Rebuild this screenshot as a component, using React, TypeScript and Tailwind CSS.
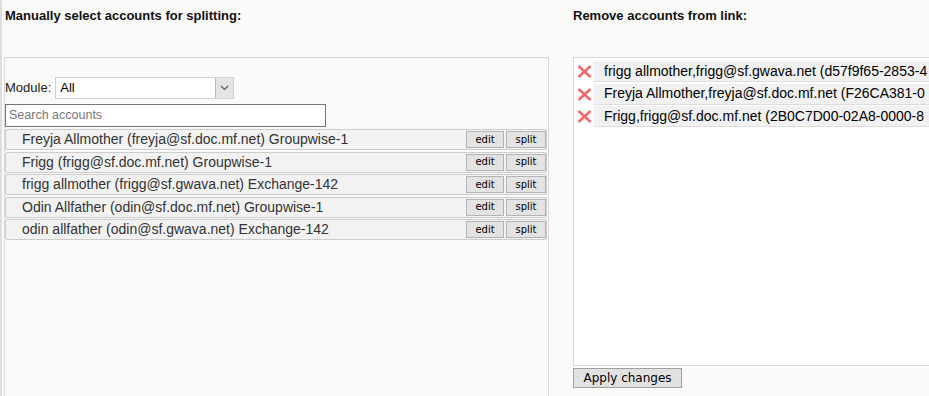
import React from "react";

const rows = [
  "Freyja Allmother (freyja@sf.doc.mf.net) Groupwise-1",
  "Frigg (frigg@sf.doc.mf.net) Groupwise-1",
  "frigg allmother (frigg@sf.gwava.net) Exchange-142",
  "Odin Allfather (odin@sf.doc.mf.net) Groupwise-1",
  "odin allfather (odin@sf.gwava.net) Exchange-142",
];

const linked = [
  "frigg allmother,frigg@sf.gwava.net (d57f9f65-2853-4",
  "Freyja Allmother,freyja@sf.doc.mf.net (F26CA381-0",
  "Frigg,frigg@sf.doc.mf.net (2B0C7D00-02A8-0000-8",
];

function RedX() {
  return (
    <svg width="15" height="13" viewBox="0 0 15 13" className="block">
      <path d="M1.5 1 L13.5 12 M13.5 1 L1.5 12" stroke="#f46a6a" strokeWidth="2.7" strokeLinecap="butt" fill="none" />
    </svg>
  );
}

export default function App() {
  return (
    <div
      className="w-[929px] h-[396px] overflow-hidden bg-[#fafaf8] flex text-black"
      style={{ fontFamily: '"Liberation Sans", Arial, sans-serif' }}
    >
      <div className="w-[2px] shrink-0 bg-[#dedede]" />
      {/* Left column */}
      <div className="ml-[2px] w-[545px] shrink-0 flex flex-col">
        <div className="pt-[8px] pl-[1px] h-[57px] text-[13px] leading-[15px] font-bold text-[#111]">
          Manually select accounts for splitting:
        </div>
        <div className="flex-1 border border-[#d8d8d8] border-b-0 bg-[#fafaf8] pt-[19px]">
          <div className="flex items-center h-[22px] text-[13px] text-[#222]">
            <span className="mr-[4px]">Module:</span>
            <div className="relative w-[179px] h-[22px] bg-white border border-[#d0d0d0] flex items-center">
              <span className="pl-[4px] text-[13px] text-black">All</span>
              <div className="absolute right-0 top-0 bottom-0 w-[18px] bg-[#e5e5e5] border-l border-[#b9b9b9] flex items-center justify-center">
                <svg width="9" height="6" viewBox="0 0 9 6">
                  <path d="M1 1 L4.5 4.5 L8 1" stroke="#555" strokeWidth="1.1" fill="none" />
                </svg>
              </div>
            </div>
          </div>
          <div className="mt-[5px] w-[321px] h-[23px] border border-[#767676] bg-white flex items-center pl-[3px] text-[12.5px] text-[#777]">
            Search accounts
          </div>
          <div className="mt-[2px] flex flex-col gap-[1.5px] pr-[1px]">
            {rows.map((r) => (
              <div
                key={r}
                className="flex items-center h-[21px] border border-[#cccccc] rounded-[2px] bg-[#f2f2f2] pl-[16px] pr-0 text-[14px] text-[#333] whitespace-nowrap"
              >
                <span className="flex-1">{r}</span>
                <button
                  className="w-[38px] h-[17px] bg-[#e3e3e3] border border-[#b4b4b4] text-[10px] leading-none text-black flex items-center justify-center"
                  style={{ fontFamily: '"DejaVu Sans", sans-serif' }}
                >
                  edit
                </button>
                <button
                  className="ml-[2px] w-[40px] h-[17px] bg-[#e3e3e3] border border-[#b4b4b4] text-[10px] leading-none text-black flex items-center justify-center"
                  style={{ fontFamily: '"DejaVu Sans", sans-serif' }}
                >
                  split
                </button>
              </div>
            ))}
          </div>
        </div>
      </div>
      {/* Right column */}
      <div className="ml-[24px] w-[420px] shrink-0 flex flex-col">
        <div className="pt-[8px] h-[57px] text-[13px] leading-[15px] font-bold text-[#111]">
          Remove accounts from link:
        </div>
        <div className="h-[309px] border border-[#d8d8d8] bg-white pt-[3px] flex flex-col gap-[1.5px]">
          {linked.map((l) => (
            <div key={l} className="flex items-center h-[21px]">
              <div className="w-[20px] flex justify-center pl-[1px]">
                <RedX />
              </div>
              <div className="flex-1 h-[21px] bg-[#f1f1f1] border-b border-[#dddddd] pl-[10px] flex items-center text-[14px] text-black whitespace-nowrap overflow-hidden">
                {l}
              </div>
            </div>
          ))}
        </div>
        <div className="mt-[2px]">
          <button
            className="w-[109px] h-[20px] bg-[#e1e1e1] border border-[#a0a0a0] text-[12px] leading-none text-black flex items-center justify-center"
            style={{ fontFamily: '"DejaVu Sans", sans-serif' }}
          >
            Apply changes
          </button>
        </div>
      </div>
    </div>
  );
}
